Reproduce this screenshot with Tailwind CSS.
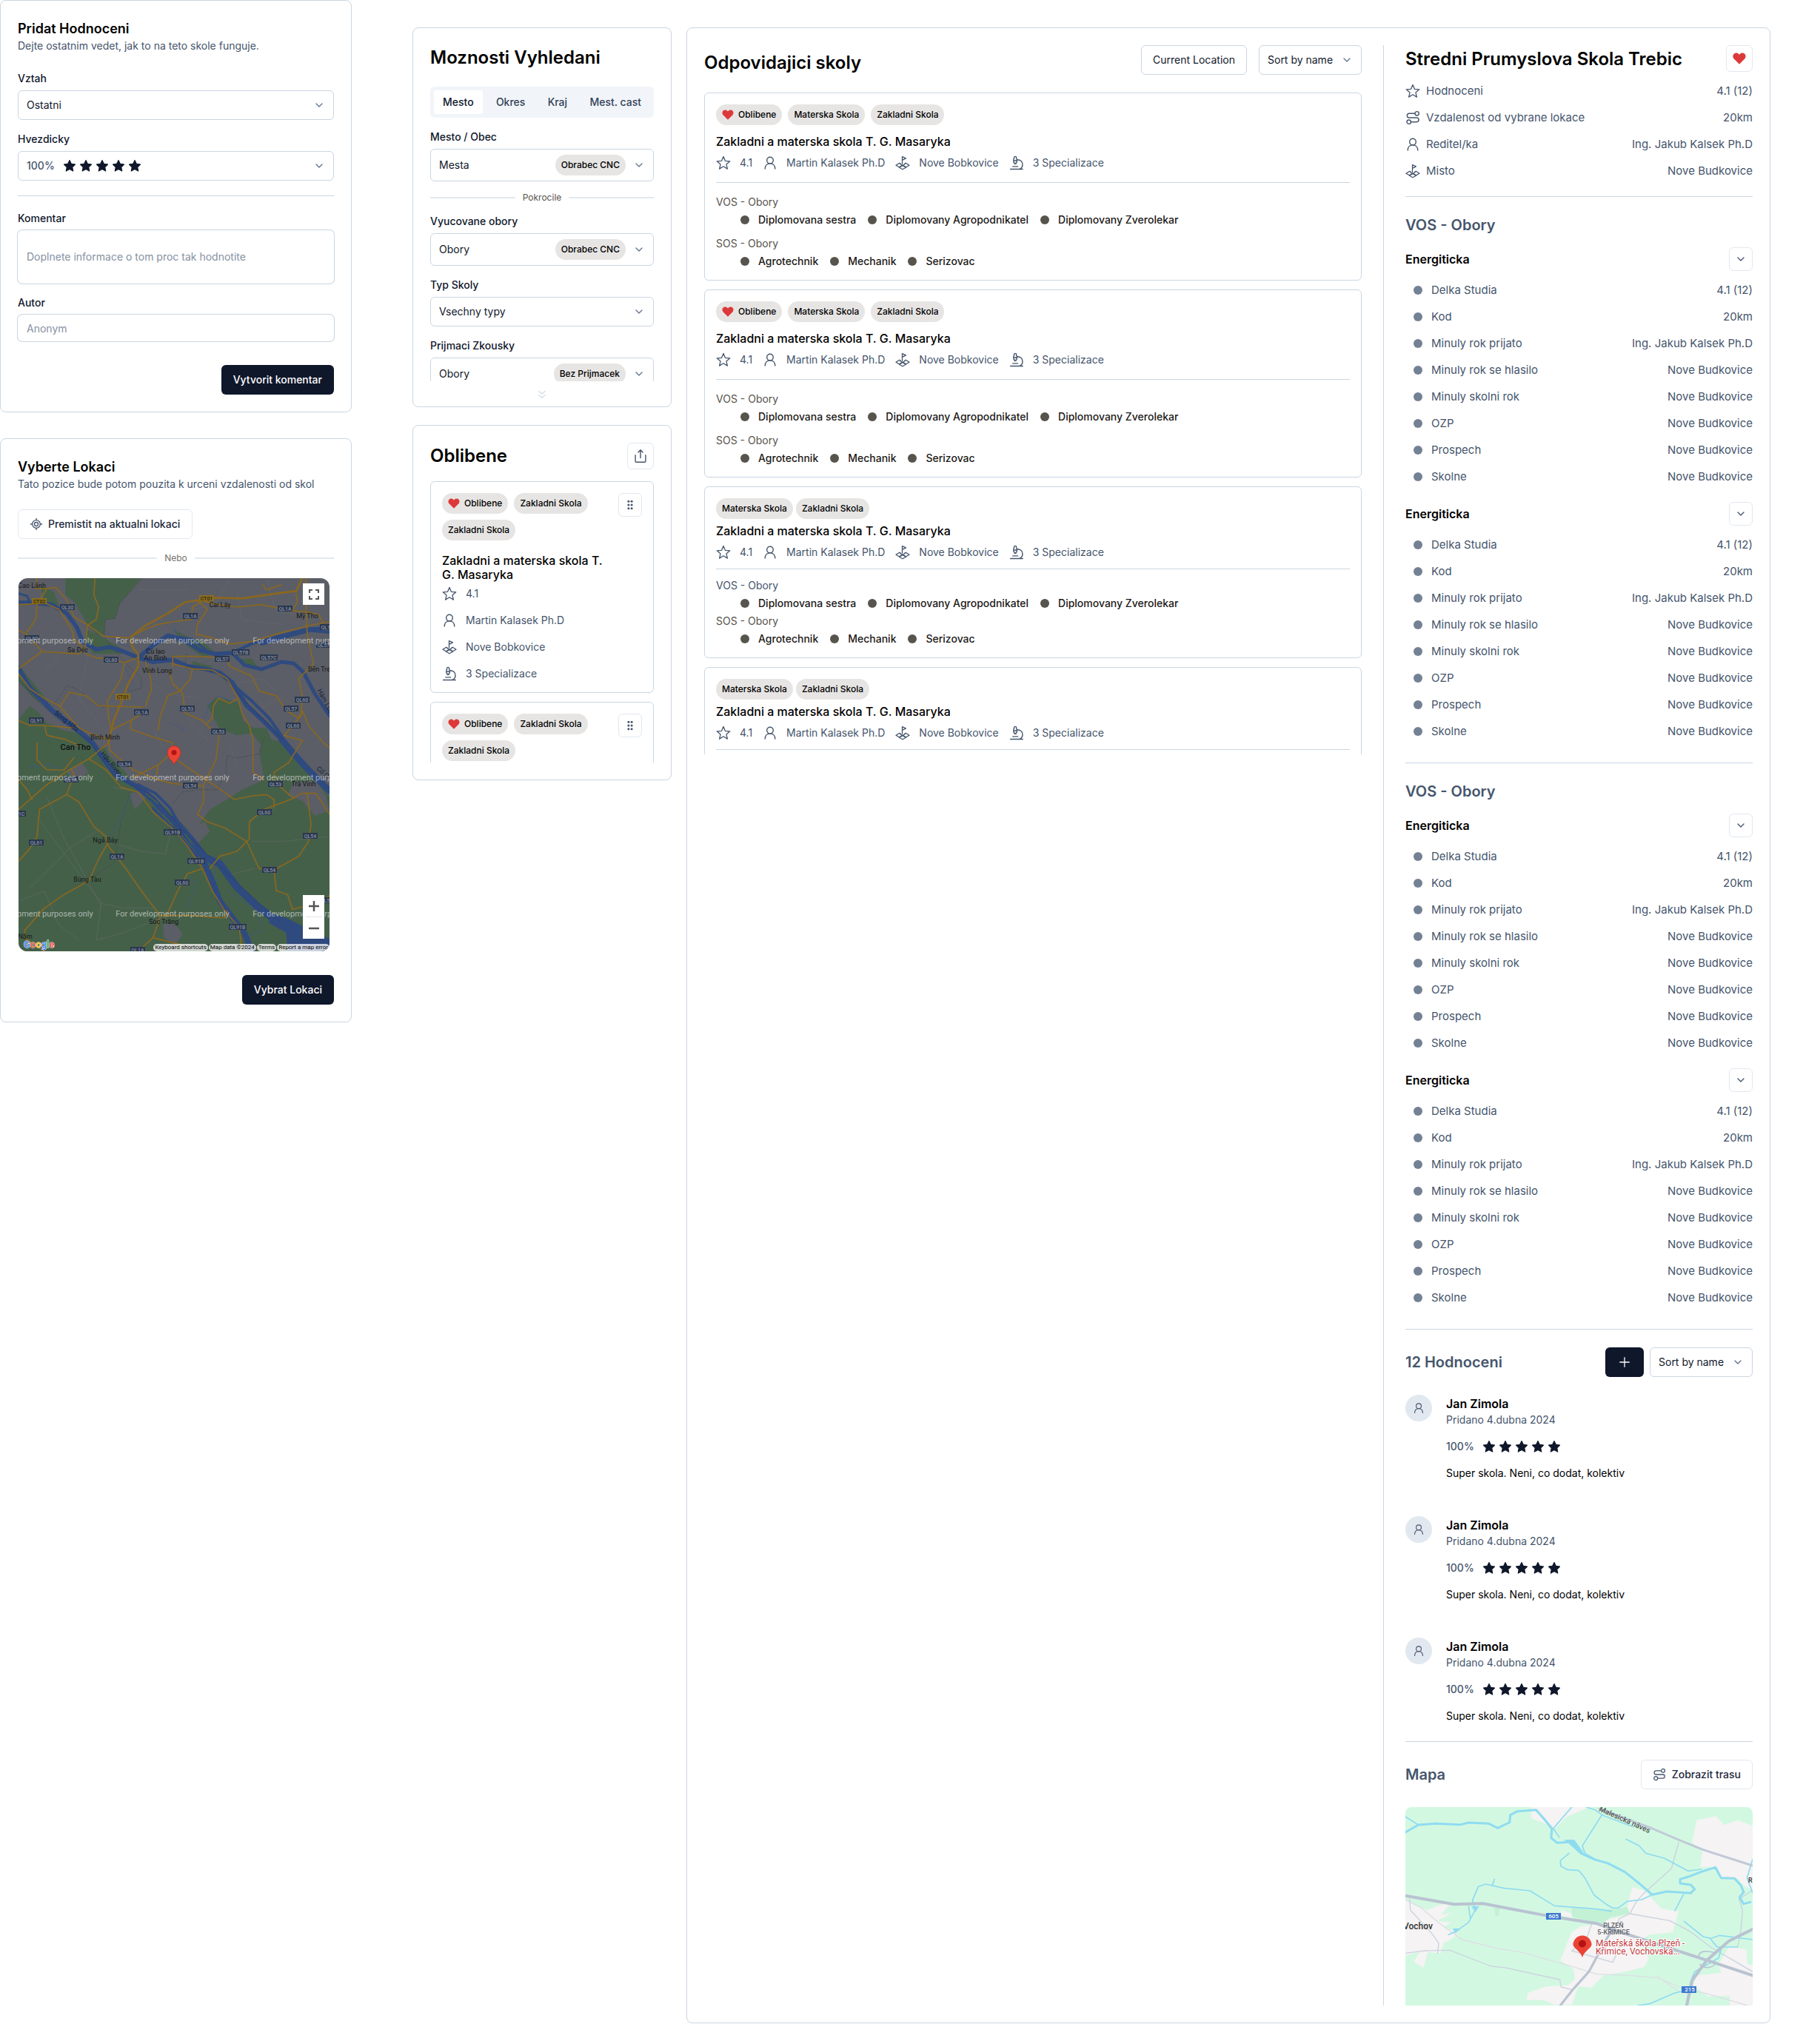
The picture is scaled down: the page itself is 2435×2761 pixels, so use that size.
<!DOCTYPE html>
<html lang="cs">
<head>
<meta charset="utf-8">
<meta name="viewport" content="width=device-width, initial-scale=1">
<title>Vyhledavani skol</title>
<script src="https://cdn.jsdelivr.net/npm/@tailwindcss/browser@4"></script>
</head>
<body class="bg-white font-['Inter',sans-serif] text-sm leading-5 text-black">

<!-- Shared icons -->
<svg class="hidden" aria-hidden="true">
  <symbol id="i-chevron" viewBox="0 0 24 24"><path d="m6 9 6 6 6-6" fill="none" stroke="currentColor" stroke-width="2" stroke-linecap="round" stroke-linejoin="round"/></symbol>
  <symbol id="i-chevrons" viewBox="0 0 24 24"><path d="m5.500 5 6.500 5.500 6.500-5.500M5.500 13l6.500 5.500 6.500-5.500" fill="none" stroke="currentColor" stroke-width="1.600" stroke-linecap="round" stroke-linejoin="round"/></symbol>
  <symbol id="i-starfill" viewBox="2 2 20 20"><path d="M12 2.600l2.900 6.100 6.600.9-4.800 4.600 1.200 6.700L12 17.700l-5.900 3.200 1.200-6.700L2.500 9.600l6.600-.9z" fill="currentColor" stroke="currentColor" stroke-width="1.400" stroke-linejoin="round"/></symbol>
  <symbol id="i-heart" viewBox="0 0 20 18"><path d="M10 17.600 1.600 9.200C-.2 7-.1 3.800 1.900 1.900 4 0 7.200.1 9 2.200L10 3.100l1-.9c1.800-2.100 5-2.200 7.100-.3 2 1.900 2.100 5.100.3 7.300z" fill="#dc3a3a"/></symbol>
  <symbol id="i-star" viewBox="0 0 20 20"><path d="M10 1.400l2.400 5.900 6.400.5-4.900 4.100 1.500 6.200L10 14.800l-5.400 3.300 1.500-6.200L1.200 7.800l6.400-.5z" fill="none" stroke="currentColor" stroke-width="1.300" stroke-linejoin="round"/></symbol>
  <symbol id="i-person" viewBox="0 0 20 20"><g fill="none" stroke="currentColor" stroke-width="1.400" stroke-linecap="round"><circle cx="10" cy="6.600" r="4.300"/><path d="M3.200 18c.1-4.300 2.800-7.100 6.800-7.100s6.700 2.800 6.800 7.100"/></g></symbol>
  <symbol id="i-place" viewBox="0 0 20 20"><g fill="none" stroke="currentColor" stroke-width="1.300" stroke-linejoin="round" stroke-linecap="round"><path d="M9.500 11.300V1.600l4.900 2.300-4.900 2.400"/><path d="M6.900 10.700 5.300 10.500 1 13.300l4.300 2.500 4.400-2.500-2.800-1.700zM13.100 10.700l1.600-.2L19 13.300l-4.300 2.500-4.400-2.500 2.800-1.700z"/><path d="M5.500 16.200 10 13.600l4.500 2.600L10 18.800z"/></g></symbol>
  <symbol id="i-scope" viewBox="0 0 20 20"><g fill="none" stroke="currentColor" stroke-width="1.400" stroke-linecap="round" stroke-linejoin="round"><path d="M1.600 18.500h16.600M4.800 14.900h6.800M6.600 3.900V2.600c0-.8.600-1.200 1.500-1.200s1.500.4 1.500 1.200v1.300c.5.500.7 1 .7 1.700v3.300l-1.200 1.200v1.300h-2v-1.300L5.900 8.900V5.600c0-.7.200-1.200.7-1.700zM6 7h4.200M11 5.700c4 .2 7 2.800 7 6.500 0 2.800-1.700 5.200-4.300 6.200"/></g></symbol>
  <symbol id="i-route" viewBox="0 0 20 20"><g fill="none" stroke="currentColor" stroke-width="1.400" stroke-linecap="round"><circle cx="15.600" cy="4.300" r="2.700"/><circle cx="4.700" cy="15.700" r="2.700"/><path d="M12.700 4.300H5.200a2.850 2.850 0 0 0 0 5.700h10a2.850 2.850 0 0 1 0 5.700H7.600"/></g></symbol>
  <symbol id="i-share" viewBox="0 0 20 20"><path d="M10 12.500V1.900M6.900 4.900 10 1.800l3.100 3.100M3.100 8.800V17c0 .8.500 1.300 1.300 1.300h11.200c.8 0 1.300-.5 1.300-1.300V8.800" fill="none" stroke="currentColor" stroke-width="1.400" stroke-linecap="round" stroke-linejoin="round"/></symbol>
  <symbol id="i-dots" viewBox="0 0 16 16"><g fill="currentColor"><circle cx="5.900" cy="3.200" r="1.500"/><circle cx="10.100" cy="3.200" r="1.500"/><circle cx="5.900" cy="8" r="1.500"/><circle cx="10.100" cy="8" r="1.500"/><circle cx="5.900" cy="12.800" r="1.500"/><circle cx="10.100" cy="12.800" r="1.500"/></g></symbol>
  <symbol id="i-target" viewBox="0 0 16 16"><g fill="none" stroke="currentColor" stroke-width="1.300"><circle cx="8" cy="8" r="5.300"/><circle cx="8" cy="8" r="2.500"/><path d="M8 0v2.700M8 13.300V16M0 8h2.700M13.300 8H16"/></g></symbol>
  <symbol id="i-plus" viewBox="0 0 16 16"><path d="M8 1.300v13.400M1.300 8h13.400" fill="none" stroke="currentColor" stroke-width="1.300"/></symbol>
</svg>

<div class="flex items-start pb-7">

  <!-- Dialogs -->
  <div class="flex w-[475px] shrink-0 flex-col gap-[35px]">
    <form class="rounded-lg border border-slate-300 p-[23px]">
      <h2 class="pt-0.5 text-lg leading-[26px] font-semibold">Pridat Hodnoceni</h2>
      <p class="text-slate-600">Dejte ostatnim vedet, jak to na teto skole funguje.</p>

      <div class="mt-6 flex flex-col gap-1.5">
        <label for="vztah" class="font-medium text-slate-900">Vztah</label>
        <div class="grid">
          <select id="vztah" class="col-start-1 row-start-1 h-10 w-full appearance-none rounded-md border border-slate-300 px-[11px] text-slate-900"><option>Ostatni</option></select>
          <span class="pointer-events-none col-start-1 row-start-1 flex items-center justify-end px-3"><svg class="size-4 text-slate-500"><use href="#i-chevron"/></svg></span>
        </div>
      </div>

      <div class="mt-4 flex flex-col gap-1.5">
        <label for="hvezdicky" class="font-medium text-slate-900">Hvezdicky</label>
        <div class="grid">
          <select id="hvezdicky" class="col-start-1 row-start-1 h-10 w-full appearance-none rounded-md border border-slate-300 px-[11px] font-medium text-slate-600"><option>100%</option></select>
          <span class="pointer-events-none col-start-1 row-start-1 flex items-center gap-1.5 pr-3 pl-[62px] text-slate-900">
            <svg class="size-4"><use href="#i-starfill"/></svg><svg class="size-4"><use href="#i-starfill"/></svg><svg class="size-4"><use href="#i-starfill"/></svg><svg class="size-4"><use href="#i-starfill"/></svg><svg class="size-4"><use href="#i-starfill"/></svg>
            <svg class="ml-auto size-4 text-slate-500"><use href="#i-chevron"/></svg>
          </span>
        </div>
      </div>

      <hr class="my-5 border-slate-300">

      <div class="flex flex-col gap-1.5">
        <label for="komentar" class="font-medium text-slate-900">Komentar</label>
        <textarea id="komentar" placeholder="Doplnete informace o tom proc tak hodnotite" class="block h-18 w-full resize-none rounded-md px-3 py-[26px] ring-1 ring-slate-300 placeholder:text-[#8591a3]"></textarea>
      </div>
      <div class="mt-4 flex flex-col gap-1.5">
        <label for="autor" class="font-medium text-slate-900">Autor</label>
        <input id="autor" type="text" placeholder="Anonym" class="h-9 w-full rounded-md px-3 ring-1 ring-slate-300 placeholder:text-[#8591a3]">
      </div>
      <div class="mt-8 flex justify-end">
        <button type="submit" class="h-10 rounded-md bg-slate-900 px-4 font-medium text-white">Vytvorit komentar</button>
      </div>
    </form>

    <section class="rounded-lg border border-slate-300 p-[23px]">
      <h2 class="pt-0.5 text-lg leading-[26px] font-semibold">Vyberte Lokaci</h2>
      <p class="text-slate-600">Tato pozice bude potom pouzita k urceni vzdalenosti od skol</p>
      <button type="button" class="mt-6 flex h-10 items-center gap-2 rounded-md border border-slate-200 px-4 font-medium text-slate-800"><svg class="size-4 text-slate-600"><use href="#i-target"/></svg>Premistit na aktualni lokaci</button>
      <div class="mt-4 flex items-center gap-2.5">
        <span class="h-0.5 flex-1 bg-slate-200"></span><span class="text-xs leading-5 text-stone-500">Nebo</span><span class="h-0.5 flex-1 bg-slate-200"></span>
      </div>

      <div class="relative mt-[17px] mr-1.5 ml-px h-[504px] overflow-hidden rounded-xl bg-[#5b5e66]">
        <svg id="delta-map" class="h-full w-full" viewBox="0 0 420 504" preserveAspectRatio="xMidYMid slice" role="img" aria-label="Mapa okoli Can Tho">
          <g transform="scale(.33333) translate(-15 -333)" fill="none" stroke-linejoin="round" stroke-linecap="round">
            <g fill="#456049">
              <path d="M205 333H512L475 378 425 435 405 497 368 500 362 560 335 565 300 530 240 430 205 400z"/>
              <path d="M100 360l60 30 20 60-60-30z"/>
              <path d="M15 905 60 850 100 880 130 920 200 950 260 960 330 1020 370 1020 380 1050 450 1120 470 1160 540 1200 640 1290 680 1330 720 1370 790 1270 860 1230 920 1190 1010 1150 1000 1090 990 1030 1010 980 1100 1000 1200 1120 1275 1220V1845H15z"/>
              <path d="M780 850 815 815 905 835 925 910 965 940 1020 940 1040 990 1000 1010 960 960 900 970 830 945z"/>
              <path d="M15 680 60 740 110 800 140 850 90 830 40 780 15 750z"/>
              <path d="M290 540 350 570 420 610 460 640 400 640 320 640 285 600z"/>
              <path d="M640 540l60 30 60 20 60 50-60 10-60-40zM720 670l80 20-20 20-60-10zM900 660l60 0 30 40-50-10z"/>
            </g>
            <g fill="#5b5e66">
              <path d="M1130 1160l90-5 40 60 15 60-60 20-50-60-60-20z"/><path d="M600 1730l50 5 30 40-30 45-45-30z"/><path d="M465 1205l50-10 20 25-50 50zM700 1350l70-30 20 40-60 60z"/><path d="M210 1120l60-40 30 40-50 30z"/>
            </g>
            <g stroke="#6b6f75" stroke-width="2" opacity=".7">
              <path d="M60 1590 230 1420 330 1360M90 1300 350 1650 330 1800 440 1770 620 1700M20 1640 120 1600 180 1740 260 1800M130 1220l70 170 90 160 60 110M410 1410l100 30 100 10 20-80M350 1650l90 20 130 0M960 1400l120 0 195-20M850 1540l120-30M400 1180l160 30M230 600l-120 120M560 760l60 40 120 20M620 1000l-60 60M870 340l-60 100-90 20M900 380l20 120 160 20M1020 340l40 130 160 20M300 620l-40 200 80 100M900 760l100-20 60 50M1000 860l60-40 60 60M500 380l200 0M560 940l40 80M700 900l90 100M870 1010l40 100"/>
            </g>
            <g stroke="#41444b" stroke-width="2.500" stroke-dasharray="3 7">
              <path d="M518 333 425 435 405 497 366 500 362 570 400 620 470 700 515 740 510 780 440 795M150 870 160 840 215 768 255 785 350 855 410 850M695 640 690 690M465 1205 430 1320 410 1450 400 1490 320 1540M640 1245 680 1200 740 1190 820 1190 855 1120 860 1052 900 1062 990 1045 1010 980"/>
            </g>
            <g stroke="#3a5894" stroke-width="2.500" opacity=".8">
              <path d="M770 900 790 840 830 810 900 840M440 680 480 760 440 800M370 550l60 50 60 20M690 950l-60-30M1130 900l-60 100M470 1210l-40 100-60 90M690 1540l50 30-40 100M860 1600l120 80 20 80-60 30M820 1560l-20-60 90-30M1100 1000l60 60-20 60M60 1100l80-10 60 20M640 500l20 90"/>
            </g>
            <g stroke="#2f4a7f">
              <path stroke-width="17" d="M15 432 80 433 150 440 210 475 250 530 275 590 330 622 385 612 440 630 500 655 560 605 620 565 690 585 750 625 810 640 880 636"/>
              <path stroke-width="9" d="M15 395 50 405 60 430M660 570 720 580 790 636"/>
              <path stroke-width="12" d="M880 636 960 598 1080 565 1190 538 1275 535M1000 600 1100 570 1200 545 1275 552"/>
              <path stroke-width="18" d="M500 655 560 672 640 664 700 690 770 700 830 716 880 755 915 810 940 850 1000 905 1080 985"/>
              <path stroke-width="12" d="M890 770 960 830 1030 900 1080 970"/>
              <path stroke-width="26" d="M1080 985 1130 1045 1190 1110 1275 1195"/>
              <path stroke-width="15" d="M885 640 930 685 1000 702 1080 672 1130 678 1170 715 1215 800 1275 890"/>
              <path stroke-width="20" d="M15 700 60 775 150 868 250 945 315 1000 355 1060 410 1130 500 1180"/>
              <path stroke-width="24" d="M500 1180 560 1230 630 1310 700 1380 760 1455"/>
              <path stroke-width="11" d="M500 1170 570 1205 630 1265 660 1320M560 1265 640 1350 740 1460"/>
              <path stroke-width="30" d="M640 1310 720 1400 770 1465 830 1490 900 1585 980 1660 1050 1715"/>
              <path stroke-width="24" d="M765 1480 800 1560 830 1640 890 1720 930 1770 960 1845"/>
            </g>
            <path fill="#2f4a7f" d="M1030 1690 1100 1710 1180 1750 1275 1795V1845H1105L1100 1770 1030 1730z"/>
            <g stroke="#456049" stroke-width="5"><path d="M530 1205 580 1245M600 1290 640 1335M690 1370 720 1410"/></g>
            <g stroke="#1f2f52" stroke-width="2" stroke-dasharray="2 7"><path d="M20 750 80 820 170 900 300 990 400 1130 560 1215 700 1375 850 1520 1000 1660 1080 1730M700 690 830 716 930 830 1090 990"/></g>
            <g stroke="#8a671f" stroke-width="5">
              <path d="M15 440 90 437 130 375 165 370 210 420 240 490 300 525 360 568 460 575"/>
              <path d="M90 333 85 375 125 375M130 437 180 460 230 540 240 580 280 620 260 640 110 630 15 700M110 630 50 560 15 545M90 440 85 500 50 550"/>
              <path d="M325 333 320 400 340 450 330 500 295 525 285 610"/>
              <path d="M285 640 330 655 390 662 445 675 500 655M445 675 430 740 400 790 375 830 380 900 390 940"/>
              <path d="M470 570 530 540 580 520 640 510 715 500 720 450 760 425 820 440 900 450 1000 440 1090 460 1180 470 1230 480 1250 515"/>
              <path d="M745 425 780 460 740 520 735 560 800 575 870 600 960 590 1060 560 1190 525 1275 510"/>
              <path d="M1140 395 1145 430 1120 470M1180 333 1180 470 1185 560 1210 680 1150 740 1165 810 1160 890M1005 360 1020 380 1080 360"/>
              <path d="M530 670 550 740 555 780 530 850M720 700 710 740 670 790 620 810 590 890 580 950"/>
              <path d="M640 690 640 650 760 650 860 660 870 690 960 730 990 790 1060 810 1100 870 1150 900 1165 870 1190 930 1250 1000 1275 1020"/>
              <path d="M625 710 640 760 680 800 690 880 760 910 790 940 820 950"/>
              <path d="M640 680 720 700 800 705 860 740 905 820 870 840 825 820 805 850 800 900 780 920"/>
              <path d="M905 820 920 880 950 930 965 990 965 1120 1010 1150"/>
              <path d="M15 720 60 780 120 820 180 850 260 940 300 960 385 990"/>
              <path d="M185 850 220 795 290 810 340 850 520 855M15 910 60 930 120 930 240 940M120 930 130 970 200 985 260 1010M90 1000 90 1070 130 1110 200 1110 240 1060"/>
              <path d="M385 950 470 910 520 880M470 910 470 945 570 980 640 1000 625 1050"/>
              <path d="M380 1000 385 1030 430 1070 480 1110 580 1150 640 1165 760 1175M480 1140 580 1090 620 1055M580 1090 575 1130"/>
              <path d="M650 1065 700 1100 760 1140 820 1180 890 1230 960 1215 1020 1210 1050 1230 1050 1265"/>
              <path d="M765 1175 765 1240 740 1290 780 1320 850 1345 940 1400 990 1510 1060 1510 1150 1460 1190 1400 1200 1330 1185 1210"/>
              <path d="M830 950 815 1070 765 1170M1160 890 1090 970 1165 990 1110 1080 1050 1120 1060 1165 1130 1225"/>
              <path d="M15 1270 130 1170 220 1110 300 1065 380 1000M230 1110 240 1130 210 1210 100 1270 90 1380 60 1430 15 1480"/>
              <path d="M210 1210 260 1240 320 1340 370 1380 380 1420 450 1510 520 1610 590 1700 560 1790 500 1845"/>
              <path d="M375 1410 340 1470 300 1560 200 1615 120 1670 40 1760 40 1790 120 1845"/>
              <path d="M300 1065 370 1110 430 1180 500 1200 560 1280 640 1350 700 1420 760 1510 800 1600 850 1680 910 1750 920 1845"/>
              <path d="M590 1700 700 1700 850 1710 860 1680M610 1710 660 1600 700 1530 760 1510M560 1790 680 1820"/>
              <path d="M790 1510 830 1460 900 1440 950 1390 950 1320 1010 1270 1130 1225 1160 1205 1220 1205 1275 1290"/>
              <path d="M1050 1520 1060 1600 1105 1615 1125 1675 1165 1665M1275 1620 1240 1640"/>
              <path d="M15 1150 50 1190 70 1230"/>
            </g>
            <g stroke="#8a671f" stroke-width="8">
              <path d="M1165 333 1140 385 1060 395 920 415 820 412 690 430 620 475 530 525 470 570 475 610 500 640 500 690 460 760 430 840 400 910 380 1000"/>
            </g>
          </g>
          <g id="delta-labels" font-family="Roboto, sans-serif" text-anchor="middle"></g>
          <path d="M210 252c-1.200-5-9-9-9-16.500a9 9 0 0 1 18 0c0 7.500-7.800 11.500-9 16.500z" fill="#ea4335" stroke="#c5221f" stroke-width=".6"/><circle cx="210" cy="235.500" r="3.500" fill="#b31412"/>
          <text x="7" y="499" font-family="Roboto, sans-serif" font-size="13" font-weight="500" stroke="#fff" stroke-width="1" paint-order="stroke"><tspan fill="#4285f4">G</tspan><tspan fill="#ea4335">o</tspan><tspan fill="#fbbc05">o</tspan><tspan fill="#4285f4">g</tspan><tspan fill="#34a853">l</tspan><tspan fill="#ea4335">e</tspan></text>
        </svg>
        <button type="button" aria-label="Cela obrazovka" class="absolute top-[7px] right-[7px] flex size-[29px] items-center justify-center bg-white"><svg class="size-3.5" viewBox="0 0 14 14"><path d="M1 5V1h4M9 1h4v4M13 9v4H9M5 13H1V9" fill="none" stroke="#555" stroke-width="2"/></svg></button>
        <div class="absolute right-[7px] bottom-[17px] flex w-[29px] flex-col items-center bg-white">
          <button type="button" aria-label="Priblizit" class="flex h-[29px] w-full items-center justify-center"><svg class="size-3.5" viewBox="0 0 14 14"><path d="M7 0v14M0 7h14" stroke="#555" stroke-width="2.500"/></svg></button>
          <span class="h-px w-[22px] bg-neutral-200"></span>
          <button type="button" aria-label="Oddalit" class="flex h-[29px] w-full items-center justify-center"><svg class="size-3.5" viewBox="0 0 14 14"><path d="M0 7h14" stroke="#555" stroke-width="2.500"/></svg></button>
        </div>
        <div class="absolute right-0 bottom-0 flex gap-px font-['Roboto',sans-serif] text-[8px] leading-[10px] text-black">
          <a href="#" class="rounded-full bg-white/75 px-0.5">Keyboard shortcuts</a><span class="rounded-full bg-white/75 px-0.5">Map data ©2024</span><a href="#" class="rounded-full bg-white/75 px-0.5">Terms</a><a href="#" class="rounded-full bg-white/75 px-0.5">Report a map error</a>
        </div>
      </div>

      <div class="mt-8 flex justify-end">
        <button type="button" class="h-10 rounded-md bg-slate-900 px-4 font-medium text-white">Vybrat Lokaci</button>
      </div>
    </section>
  </div>

  <!-- Search options and favourites -->
  <div class="mt-[37px] ml-[82px] flex w-[350px] shrink-0 flex-col gap-6">
    <section class="rounded-lg border border-slate-300 px-[23px] pt-[23px] pb-2">
      <div class="h-[454px] overflow-hidden">
        <h2 class="pt-0.5 text-2xl leading-[30px] font-semibold">Moznosti Vyhledani</h2>
        <div role="tablist" class="mt-6 flex justify-between rounded-md bg-slate-100 p-[5px] font-medium text-slate-700">
          <button type="button" role="tab" aria-selected="true" class="h-8 rounded-[3px] bg-white px-3 text-slate-900">Mesto</button>
          <button type="button" role="tab" class="h-8 px-3">Okres</button>
          <button type="button" role="tab" class="h-8 px-3">Kraj</button>
          <button type="button" role="tab" class="h-8 px-3">Mest. cast</button>
        </div>

        <div class="mt-4 flex flex-col gap-1.5">
          <label for="mesto" class="font-medium text-slate-900">Mesto / Obec</label>
          <div class="grid">
            <select id="mesto" class="col-start-1 row-start-1 h-11 w-full appearance-none rounded-md border border-slate-300 px-[11px] text-slate-900"><option>Mesta</option></select>
            <span class="pointer-events-none col-start-1 row-start-1 flex items-center justify-end gap-2.5 px-3"><span class="rounded-full bg-stone-200 px-2 py-1 text-xs leading-5 font-medium">Obrabec CNC</span><svg class="size-4 text-slate-500"><use href="#i-chevron"/></svg></span>
          </div>
        </div>

        <div class="my-3 flex items-center gap-2.5">
          <span class="h-0.5 flex-1 bg-slate-200"></span><span class="text-xs leading-5 text-stone-600">Pokrocile</span><span class="h-0.5 flex-1 bg-slate-200"></span>
        </div>

        <div class="flex flex-col gap-1.5">
          <label for="obory" class="font-medium text-slate-900">Vyucovane obory</label>
          <div class="grid">
            <select id="obory" class="col-start-1 row-start-1 h-11 w-full appearance-none rounded-md border border-slate-300 px-[11px] text-slate-900"><option>Obory</option></select>
            <span class="pointer-events-none col-start-1 row-start-1 flex items-center justify-end gap-2.5 px-3"><span class="rounded-full bg-stone-200 px-2 py-1 text-xs leading-5 font-medium">Obrabec CNC</span><svg class="size-4 text-slate-500"><use href="#i-chevron"/></svg></span>
          </div>
        </div>

        <div class="mt-4 flex flex-col gap-1.5">
          <label for="typ" class="font-medium text-slate-900">Typ Skoly</label>
          <div class="grid">
            <select id="typ" class="col-start-1 row-start-1 h-10 w-full appearance-none rounded-md border border-slate-300 px-[11px] text-slate-900"><option>Vsechny typy</option></select>
            <span class="pointer-events-none col-start-1 row-start-1 flex items-center justify-end px-3"><svg class="size-4 text-slate-500"><use href="#i-chevron"/></svg></span>
          </div>
        </div>

        <div class="mt-4 flex flex-col gap-1.5">
          <label for="zkousky" class="font-medium text-slate-900">Prijmaci Zkousky</label>
          <div class="grid">
            <select id="zkousky" class="col-start-1 row-start-1 h-11 w-full appearance-none rounded-md border border-slate-300 px-[11px] text-slate-900"><option>Obory</option></select>
            <span class="pointer-events-none col-start-1 row-start-1 flex items-center justify-end gap-2.5 px-3"><span class="rounded-full bg-stone-200 px-2 py-1 text-xs leading-5 font-medium">Bez Prijmacek</span><svg class="size-4 text-slate-500"><use href="#i-chevron"/></svg></span>
          </div>
        </div>
      </div>
      <svg class="mx-auto mt-2.5 size-4 text-slate-300"><use href="#i-chevrons"/></svg>
    </section>

    <section class="rounded-lg border border-slate-300 p-[23px]">
      <div class="flex items-center justify-between">
        <h2 class="text-2xl leading-8 font-semibold">Oblibene</h2>
        <button type="button" aria-label="Sdilet" class="flex size-9 items-center justify-center rounded-md border border-slate-200 text-slate-600"><svg class="size-5"><use href="#i-share"/></svg></button>
      </div>
      <div id="favourites" class="mt-4 flex h-[380px] flex-col gap-3 overflow-hidden"></div>
    </section>
  </div>

  <!-- Results and detail -->
  <main class="mt-[37px] mr-11 ml-5 flex min-w-0 flex-1 rounded-lg border border-slate-300 p-[23px]">
    <section class="min-w-0 flex-1 pr-[29px]">
      <div class="flex items-start gap-4">
        <h2 class="flex-1 pt-2 text-2xl leading-8 font-semibold">Odpovidajici skoly</h2>
        <button type="button" class="h-10 rounded-md border border-slate-300 px-[15px] text-slate-900">Current Location</button>
        <div class="grid w-[139px]">
          <select aria-label="Razeni skol" class="col-start-1 row-start-1 h-10 w-full appearance-none rounded-md border border-slate-300 px-[11px] text-slate-900"><option>Sort by name</option></select>
          <span class="pointer-events-none col-start-1 row-start-1 flex items-center justify-end px-3"><svg class="size-4 text-slate-500"><use href="#i-chevron"/></svg></span>
        </div>
      </div>
      <div id="schools" class="mt-6 flex h-[894px] flex-col gap-3 overflow-hidden"></div>
    </section>

    <section class="w-[499px] shrink-0 border-l border-slate-300 pl-[29px]">
      <div class="flex items-center justify-between">
        <h2 class="pt-0.5 text-2xl leading-8 font-semibold">Stredni Prumyslova Skola Trebic</h2>
        <button type="button" aria-label="Oblibene" class="flex size-9 items-center justify-center rounded-md border border-slate-200"><svg class="h-4 w-[18px]"><use href="#i-heart"/></svg></button>
      </div>
      <dl class="mt-4 flex flex-col gap-4 text-[15px] leading-5 text-slate-600">
        <div class="flex items-center gap-2"><svg class="size-5"><use href="#i-star"/></svg><dt class="flex-1">Hodnoceni</dt><dd>4.1 (12)</dd></div>
        <div class="flex items-center gap-2"><svg class="size-5"><use href="#i-route"/></svg><dt class="flex-1">Vzdalenost od vybrane lokace</dt><dd>20km</dd></div>
        <div class="flex items-center gap-2"><svg class="size-5"><use href="#i-person"/></svg><dt class="flex-1">Reditel/ka</dt><dd>Ing. Jakub Kalsek Ph.D</dd></div>
        <div class="flex items-center gap-2"><svg class="size-5"><use href="#i-place"/></svg><dt class="flex-1">Misto</dt><dd>Nove Budkovice</dd></div>
      </dl>
      <hr class="my-6 border-slate-300">
      <div data-programs></div>
      <hr class="mt-8 mb-6 border-slate-300">
      <div data-programs></div>
      <hr class="mt-8 mb-6 border-slate-300">

      <div class="flex items-center gap-2">
        <h3 class="flex-1 text-xl leading-7 font-semibold text-slate-600">12 Hodnoceni</h3>
        <button type="button" aria-label="Pridat hodnoceni" class="flex h-10 w-13 items-center justify-center rounded-md bg-slate-900 text-white"><svg class="size-4"><use href="#i-plus"/></svg></button>
        <div class="grid w-[139px]">
          <select aria-label="Razeni hodnoceni" class="col-start-1 row-start-1 h-10 w-full appearance-none rounded-md border border-slate-300 px-[11px] text-slate-900"><option>Sort by name</option></select>
          <span class="pointer-events-none col-start-1 row-start-1 flex items-center justify-end px-3"><svg class="size-4 text-slate-500"><use href="#i-chevron"/></svg></span>
        </div>
      </div>
      <div id="reviews" class="mt-6 flex flex-col gap-12"></div>
      <hr class="my-6 border-slate-300">

      <div class="flex items-center justify-between">
        <h3 class="text-xl leading-7 font-semibold text-slate-600">Mapa</h3>
        <button type="button" class="flex h-10 items-center gap-2 rounded-md border border-slate-200 px-[15px] font-medium text-slate-800"><svg class="size-[18px] text-slate-600"><use href="#i-route"/></svg>Zobrazit trasu</button>
      </div>
      <div class="mt-6 h-[268px] overflow-hidden rounded-t-lg">
        <svg class="h-full w-full" viewBox="0 0 469 268" preserveAspectRatio="xMidYMid slice" role="img" aria-label="Mapa okoli skoly">
          <rect width="469" height="268" fill="#d3f8e2"/>
          <g transform="scale(.35714 .33333) translate(-106 -363)" fill="none" stroke-linejoin="round" stroke-linecap="round">
            <g fill="#f5f3f3">
              <path d="M583 363H800L770 378 715 402 672 450 640 432 583 408z"/>
              <path d="M1208 416 1280 400 1310 435 1365 416 1419 440V700L1385 680 1360 650 1300 645 1285 605 1222 605 1228 545 1190 505z"/>
              <path d="M965 687 1010 702 1075 775 1139 785 1117 870 1030 880 985 905 1000 940 1028 975 1010 1010 940 1030 855 1045 810 1095 760 1090 735 1165H670L630 1145 563 1145 570 1115 640 1090 720 1085 747 1060 742 1020 692 985 712 930 735 870 770 845 830 838 880 815 940 800 950 740z"/>
              <path d="M106 738 150 765 190 780 230 762 280 750 240 800 285 790 225 825 280 830 250 850 305 870 285 895 250 915 240 955 190 950 175 1013 138 990 160 950 106 965V905L198 882 200 925 150 925 106 900z"/>
              <path d="M695 780 748 800 742 815 694 800zM1330 930 1395 940 1400 1000 1419 1005V1167H1333V1128L1250 1130 1195 1085 1210 1045 1300 1035 1290 1000z"/>
            </g>
            <path fill="#c3f1d5" d="M735 770 900 778 945 768 955 795 880 810 850 838 735 808zM442 768h22l-6 35h-12z"/>
            <g stroke="#dcdfe3" stroke-width="4"><path d="M106 738 165 770 230 830 320 900 450 935 540 950 640 980 740 1010 830 1040 950 1045 1060 1055 1150 1095 1250 1120 1400 1167M1060 1050 1140 1110 1180 1120"/></g>
            <g stroke="#cbd3df" stroke-width="4"><path d="M122 735 125 780 210 880 232 915 228 955M106 955 180 945 275 943 430 1008 480 1013 690 1062 695 1092 735 1103M1140 505 1112 612 1010 710 980 745 955 795 915 815 890 880M955 795 1105 823 1180 865 1260 930 1419 1030M810 838 790 900 735 945 890 992 920 920M1419 700 1368 735 1381 780 1375 860 1362 930"/></g>
            <g stroke="#8fdcf0" stroke-width="5"><path d="M106 402 155 435M735 363 665 450 688 485M850 393 775 520 785 550 830 578M790 363 825 375 850 395 968 443M940 493 990 520 1015 550 1085 570 1175 622 1225 615M1419 575 1398 650 1419 710M725 550 692 580 694 602 720 617 762 620 785 650 820 720 870 760 890 772 910 772 945 745 1000 738 1040 718M443 655 435 680M345 765 352 815M885 785 820 775 670 763 577 702 480 692 410 675 382 685 360 740 370 780 345 830 300 865 270 880M1157 718 1125 783M1160 826 1232 888 1262 895 1295 883 1419 900M1262 900 1285 930 1360 930M985 1167 1030 1160 1120 1118 1150 1110M1190 1055 1200 1030 1290 975 1300 940"/></g>
            <g stroke="#8fdcf0" stroke-width="9"><path d="M106 465 155 435 220 430 315 434 345 426 422 430 455 448 500 425 503 395 530 380 600 374 630 410 660 450 657 488 680 508 725 505 770 550 820 575 870 590 935 625 990 672 1040 718 1095 705 1185 712 1200 695 1185 678 1145 672 1145 655 1185 642 1225 625 1278 607 1300 650 1350 652 1375 680 1385 708 1370 728 1385 755 1410 748"/></g>
            <path fill="#8fdcf0" d="M355 765h30l-14 24zM705 495l40 0 40 60-30-20zM285 855h30l-20 20z"/>
            <g stroke="#c0c9d6" stroke-width="9"><path d="M840 370 1040 450 1145 498 1230 535 1419 600"/></g>
            <g stroke="#b9c3d1" stroke-width="12"><path d="M106 722 290 757 400 754 640 803 830 835 950 880 1250 985 1419 1045M1419 858 1330 905 1245 985 1190 1065 1170 1167"/></g>
            <g stroke="#b9c3d1" stroke-width="9"><path d="M895 850 865 900 800 1030 735 1108 692 1167"/></g>
            <path stroke="#b9c3d1" stroke-width="5" d="M1215 970c0-30 40-25 65-15M1220 1000c20 25 60 10 60-10"/>
          </g>
          <g font-family="Roboto, sans-serif" font-weight="500">
            <rect x="190" y="143" width="20" height="9" fill="#3b78cf"/><text x="200" y="150" font-size="8" fill="#fff" text-anchor="middle">605</text>
            <rect x="373" y="242" width="20" height="9" fill="#3b78cf"/><text x="384" y="249" font-size="8" fill="#fff" text-anchor="middle">215</text>
            <text x="-3" y="165" font-size="12" fill="#333">Vochov</text>
            <text x="463" y="102" font-size="9" fill="#333">R</text>
            <text transform="translate(261 5) rotate(24)" font-size="10" fill="#555">Malesická náves</text>
            <text x="281" y="163" font-size="9" fill="#5f6368" text-anchor="middle">PLZEŇ</text>
            <text x="281" y="172" font-size="9" fill="#5f6368" text-anchor="middle">5-KŘIMICE</text>
            <g stroke="#fff" stroke-width="2" paint-order="stroke" fill="#c5373c" font-size="12" font-weight="400"><text x="257" y="188">Mateřská škola Plzeň -</text><text x="257" y="199">Křimice, Vochovská...</text></g>
          </g>
          <path d="M239 203c-2-8-12.500-13-12.500-17a12.500 12.500 0 0 1 25 0c0 4-10.500 9-12.500 17z" fill="#ea4335"/><circle cx="239" cy="184.500" r="5" fill="#b31412"/>
        </svg>
      </div>
    </section>
  </main>
</div>

<script>
  const icon = (name, cls) => `<svg class="${cls}"><use href="#i-${name}"/></svg>`;
  const chip = text => `<span class="flex h-7 items-center gap-1.5 rounded-full bg-stone-200 px-2 text-xs font-medium">${text}</span>`;
  const loved = chip(icon('heart', 'h-3.5 w-4') + 'Oblibene');
  const facts = [['star', '4.1'], ['person', 'Martin Kalasek Ph.D'], ['place', 'Nove Bobkovice'], ['scope', '3 Specializace']];
  const factList = facts.map(([i, t]) => `<li class="flex items-center gap-3">${icon(i, 'size-5')}${t}</li>`).join('');

  // Favourite schools
  document.getElementById('favourites').innerHTML = [1, 2].map(() => `
    <article class="shrink-0 rounded-md border border-slate-300 p-[15px]">
      <div class="flex items-start justify-between">
        <div class="flex flex-1 flex-wrap gap-2">${loved}${chip('Zakladni Skola')}${chip('Zakladni Skola')}</div>
        <button type="button" aria-label="Presunout" class="flex size-8 items-center justify-center rounded-md border border-slate-200 text-slate-600">${icon('dots', 'size-4')}</button>
      </div>
      <h3 class="mt-[18px] max-w-[230px] text-base leading-[19px] font-medium">Zakladni a materska skola T. G. Masaryka</h3>
      <ul class="mt-1.5 flex flex-col gap-4 text-slate-600">${factList}</ul>
    </article>`).join('');

  // Search results
  const programs = names => `<ul class="mt-1 flex gap-4 pl-[33px] font-medium text-stone-900">${names.map(n => `<li class="flex items-center gap-3"><span class="size-3 rounded-full bg-stone-600"></span>${n}</li>`).join('')}</ul>`;
  const vos = programs(['Diplomovana sestra', 'Diplomovany Agropodnikatel', 'Diplomovany Zverolekar']);
  const sos = programs(['Agrotechnik', 'Mechanik', 'Serizovac']);
  const school = fav => `
    <article class="shrink-0 rounded-md border border-slate-300 p-[15px]">
      <div class="flex ${fav ? 'gap-2' : 'gap-1'}">${fav ? loved : ''}${chip('Materska Skola')}${chip('Zakladni Skola')}</div>
      <h3 class="${fav ? 'mt-3' : 'mt-1.5'} text-base leading-[21px] font-medium">Zakladni a materska skola T. G. Masaryka</h3>
      <ul class="mt-2 flex gap-3.5 text-slate-600">${factList}</ul>
      <hr class="${fav ? 'my-4' : 'my-3'} border-slate-300">
      <p class="${fav ? 'text-stone-600' : 'text-slate-600'}">VOS - Obory</p>${vos}
      <p class="${fav ? 'mt-3' : 'mt-1'} text-stone-600">SOS - Obory</p>${sos}
    </article>`;
  document.getElementById('schools').innerHTML = [true, true, false, false].map(school).join('');

  // Study programmes of the selected school
  const place = 'Nove Budkovice';
  const details = [['Delka Studia', '4.1 (12)'], ['Kod', '20km'], ['Minuly rok prijato', 'Ing. Jakub Kalsek Ph.D'], ['Minuly rok se hlasilo', place], ['Minuly skolni rok', place], ['OZP', place], ['Prospech', place], ['Skolne', place]];
  const programme = `
    <div>
      <div class="flex items-center justify-between">
        <h4 class="text-base leading-6 font-semibold">Energiticka</h4>
        <button type="button" aria-label="Sbalit" class="flex size-8 items-center justify-center rounded-md border border-slate-200 text-slate-600">${icon('chevron', 'size-4')}</button>
      </div>
      <dl class="mt-4 flex flex-col gap-4 text-[15px] leading-5 text-slate-600">${details.map(([k, v]) => `<div class="flex items-center gap-3 pl-[11px]"><span class="size-3 rounded-full bg-[#748094]"></span><dt class="flex-1">${k}</dt><dd>${v}</dd></div>`).join('')}</dl>
    </div>`;
  document.querySelectorAll('[data-programs]').forEach(el => {
    el.innerHTML = `<h3 class="text-xl leading-7 font-semibold text-slate-600">VOS - Obory</h3><div class="mt-4 flex flex-col gap-6">${programme}${programme}</div>`;
  });

  // Reviews
  document.getElementById('reviews').innerHTML = [1, 2, 3].map(() => `
    <article class="flex gap-[19px]">
      <span class="flex size-9 shrink-0 items-center justify-center rounded-full bg-slate-200 text-slate-600">${icon('person', 'size-4')}</span>
      <div>
        <h4 class="text-base leading-6 font-semibold">Jan Zimola</h4>
        <p class="text-slate-600">Pridano 4.dubna 2024</p>
        <div class="mt-4 flex items-center gap-1.5 font-medium text-slate-600"><span class="mr-1.5">100%</span>${icon('starfill', 'size-4 text-slate-900').repeat(5)}</div>
        <p class="mt-4">Super skola. Neni, co dodat, kolektiv</p>
      </div>
    </article>`).join('');

  // Labels of the location map: road shields, towns, rivers, watermark
  const shields = [['QL30',66,39],['QL80',18,81],['QL80',125,110],['QL1A',232,51],['QL1A',360,41],['QL57B',300,100],['QL57',275,109],['QL57C',338,107],['QL60',383,164],['QL57',368,176],['QL60',371,199],['QL53',228,176],['QL1A',166,181],['QL53',270,207],['QL91',24,192],['QL54',143,251],['QL1A',71,272],['QL54',232,280],['QL53',347,278],['QL60',332,316],['QL54',394,348],['QL54',339,394],['QL61',24,357],['QL1A',133,376],['QL91B',208,343],['QL91B',240,382],['QL60',221,411],['QL91B',296,471],['QL1A',161,502],['QL1A',417,66],['QL57',412,90],['1C',4,318],['QL53',416,435]];
  const gold = [['CT02',28,31],['CT01',254,27],['CT01',141,160]];
  const towns = [['Cao Lãnh',18,10],['Cai Lậy',272,36],['Mỹ Tho',390,51],['Sa Đéc',80,97],['Cù lao',185,99],['An Bình',185,108],['Vĩnh Long',187,125],['Bến Tre',406,123],['Bình Minh',117,215],['Ngã Bảy',117,354],['Búng Tàu',93,407],['Sóc Trăng',196,464],['Năm',9,484],['Trà Vinh',385,278]];
  const rivers = [['Sông Hậu',63,195,38],['Hậu River',123,252,50],['Hàm Luông',414,172,62],['Cổ Chiên',415,270,42]];
  const w = t => t.length * 4 + 4;
  const tag = (bg, fg) => ([t, x, y]) => `<rect x="${x - w(t) / 2}" y="${y - 4}" width="${w(t)}" height="8" fill="${bg}"/><text x="${x}" y="${y + 3}" font-size="7" font-weight="500" fill="${fg}">${t}</text>`;
  document.getElementById('delta-labels').innerHTML =
    shields.map(tag('#2a3850', '#8b92a0')).join('') + gold.map(tag('#8a6d1f', '#2d2812')).join('') +
    towns.map(([t, x, y]) => `<text x="${x}" y="${y + 3}" font-size="9" font-weight="400" fill="#15171a">${t}</text>`).join('') +
    '<text x="77" y="232" font-size="11" font-weight="500" fill="#0f1113">Can Tho</text>' +
    rivers.map(([t, x, y, r]) => `<text transform="translate(${x} ${y}) rotate(${r})" font-size="9" fill="#16233f">${t}</text>`).join('') +
    [88, 273, 457].map(y => [24, 208, 393].map(x => `<text x="${x}" y="${y}" font-size="11" fill="#fff" fill-opacity=".55">For development purposes only</text>`).join('')).join('');
</script>
</body>
</html>
